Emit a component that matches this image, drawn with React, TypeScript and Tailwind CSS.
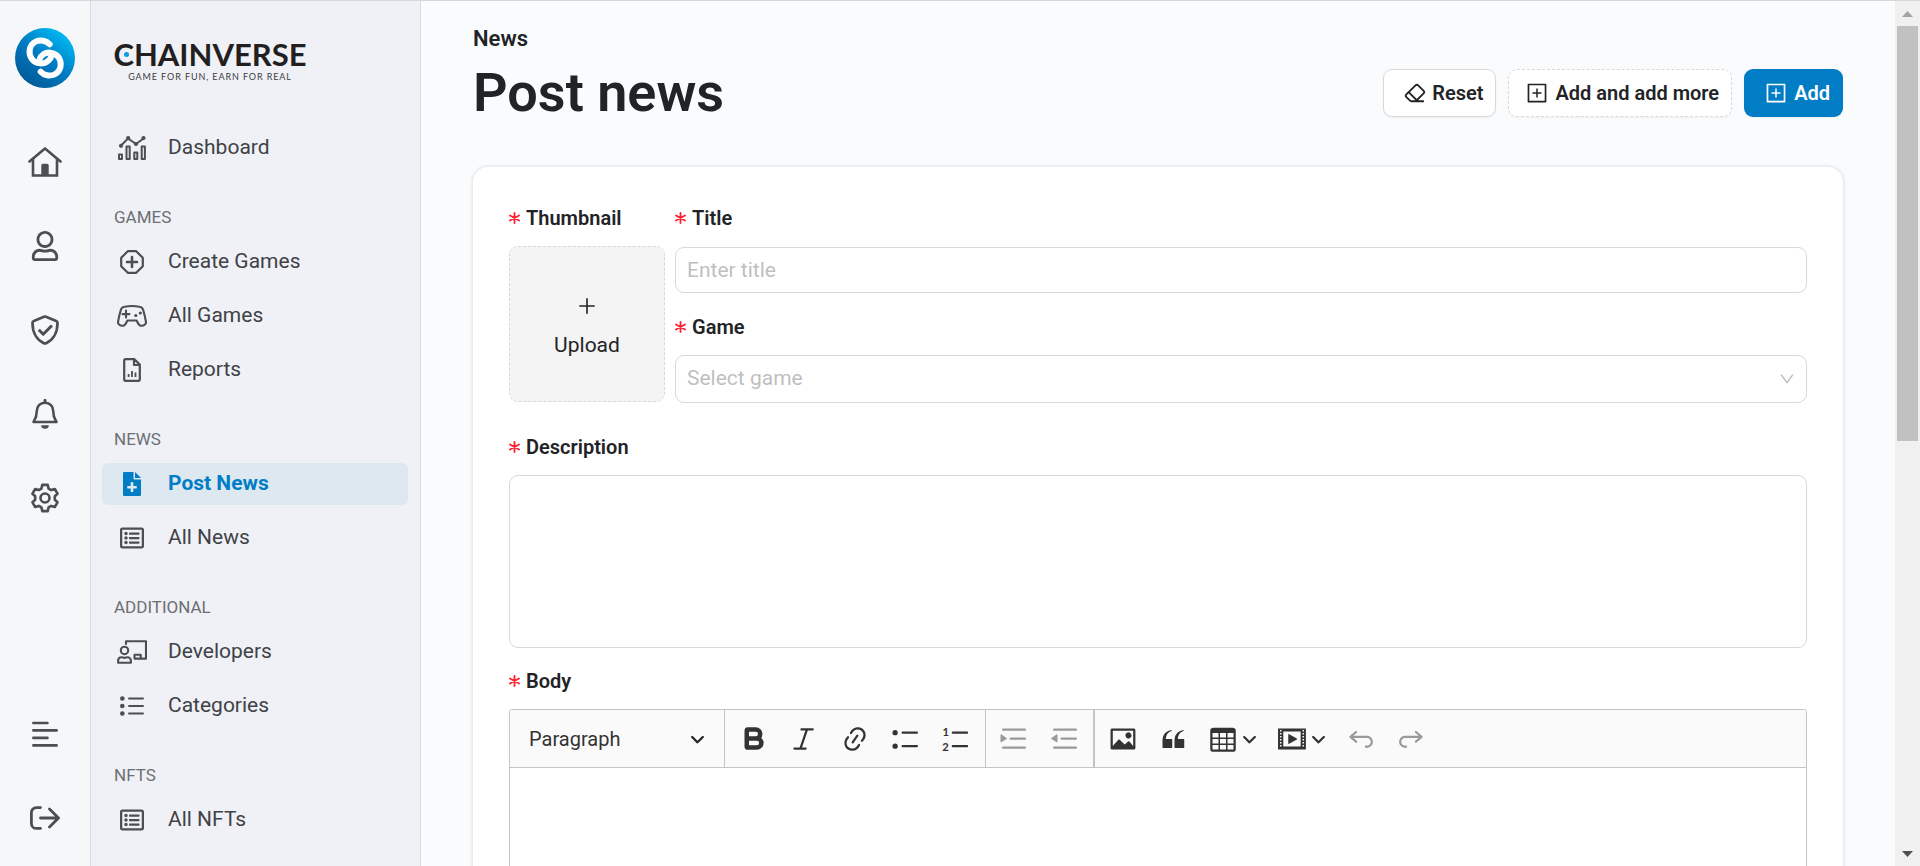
import type { ReactNode } from "react";
import { AiOutlineDown, AiOutlinePlus, AiOutlinePlusSquare } from "react-icons/ai";
import { FaRegListAlt, FaRegUser } from "react-icons/fa";
import { Bold, Eraser } from "lucide-react";

function Stroke({ w, h, sw = 2, children }: { w: number; h: number; sw?: number; children: ReactNode }) {
  return (
    <svg
      width={w}
      height={h}
      viewBox={`0 0 ${w} ${h}`}
      fill="none"
      stroke="currentColor"
      strokeWidth={sw}
      strokeLinecap="round"
      strokeLinejoin="round"
      aria-hidden="true"
    >
      {children}
    </svg>
  );
}

const HomeIcon = () => (
  <Stroke w={34} h={30} sw={2.6}>
    <path d="M1.5 14.5 17 1.6 32.5 14.5" />
    <path d="M5 12v16.5h24V12" strokeLinejoin="miter" />
    <path d="M13.3 28v-9.6a1.6 1.6 0 0 1 1.6-1.6h4.2a1.6 1.6 0 0 1 1.6 1.6V28z" fill="currentColor" stroke="none" />
  </Stroke>
);

const ShieldIcon = () => (
  <Stroke w={28} h={30} sw={2.7}>
    <path d="M13 1.8a2.6 2.6 0 0 1 2 0l10.2 4.2a2 2 0 0 1 1.3 2c0 11-5.600 17.600-11.400 20.200a2.600 2.600 0 0 1-2.200 0C7.100 25.600 1.500 19 1.500 8a2 2 0 0 1 1.300-2z" />
    <path d="m7.800 14.800 4.400 4.400 8.700-8.700" strokeWidth={3} strokeLinecap="butt" />
  </Stroke>
);

const BellIcon = () => (
  <Stroke w={26} h={30} sw={2.6}>
    <path d="M13 1.400v2" strokeWidth={3} />
    <path d="M13 3.800c-5 0-8.200 3.700-8.200 8.300 0 6-1.600 8-3.300 10.900h23c-1.700-2.900-3.300-4.900-3.300-10.900 0-4.600-3.200-8.300-8.200-8.300z" />
    <path d="M9.200 26.300h7.600a3.800 3.500 0 0 1-7.600 0z" fill="currentColor" stroke="none" />
  </Stroke>
);

const GearIcon = () => (
  <Stroke w={28} h={30} sw={2.6}>
    <circle cx="14" cy="15" r="4.500" />
    <path d="M11.300 1.900h5.400l.9 3.700 2.600 1.500 3.600-1.100 2.700 4.700-2.700 2.600v3.400l2.700 2.600-2.700 4.700-3.600-1.100-2.600 1.500-.9 3.700h-5.400l-.9-3.700-2.600-1.500-3.600 1.100-2.700-4.700 2.700-2.600v-3.400L1.500 10.700 4.200 6l3.600 1.100 2.600-1.500z" />
  </Stroke>
);

const AlignIcon = () => (
  <Stroke w={26} h={26} sw={2.700}>
    <path d="M1.400 2h14M1.400 9.400h23.200M1.400 16.900h14M1.400 24.400h23.200" />
  </Stroke>
);

const LogoutIcon = () => (
  <Stroke w={30} h={24} sw={2.800}>
    <path d="M10.500 1.600H6.400a5 5 0 0 0-5 5v10.800a5 5 0 0 0 5 5h4.100M10.500 12H28M19.500 2.900l9 9.100-9 9.100" />
  </Stroke>
);

const ChartIcon = () => (
  <Stroke w={30} h={24} sw={2}>
    <path d="m4 9.500 7-7 8 5.500 7.500-5.500" />
    <g fill="currentColor" stroke="none">
      <circle cx="4" cy="9.800" r="2.100" />
      <circle cx="11.200" cy="2.100" r="2.100" />
      <circle cx="19" cy="8" r="2.100" />
      <circle cx="26.500" cy="2.100" r="2.100" />
    </g>
    <path d="M2 18.500h3V23H2zM9.500 10.500h3.200V23H9.500zM17.300 16.500h3V23h-3zM24.700 10.500h3.200V23h-3.200z" />
  </Stroke>
);

const OctagonPlusIcon = () => (
  <Stroke w={24} h={24} sw={2.200}>
    <path d="M7.800 1.200h8.400l6.600 6.600v8.400l-6.600 6.600H7.800l-6.600-6.600V7.800z" />
    <path d="M12 7v10M7 12h10" strokeWidth={2.600} />
  </Stroke>
);

const GamepadIcon = () => (
  <Stroke w={30} h={22} sw={2.100}>
    <path d="M7.500 1.700Q15 .4 22.500 1.700c2 .3 3.200 1.500 3.700 3.300 1.200 4 2 7.700 2.700 11.500.5 2.700-2.100 4.500-5 4.200-2.400-.2-3.200-3.100-4.300-5.200h-9.200C9.300 17.600 8.500 20.500 6.100 20.700c-2.900.3-5.500-1.500-5-4.200C1.800 12.700 2.600 9 3.800 5c.5-1.800 1.700-3 3.700-3.300z" />
    <path d="M9 5.600v7M5.500 9.100h7" />
    <g fill="currentColor" stroke="none">
      <circle cx="23.300" cy="8" r="1.600" />
      <circle cx="18.800" cy="10.500" r="1.600" />
    </g>
  </Stroke>
);

const FileChartIcon = () => (
  <Stroke w={18} h={24} sw={2.200}>
    <path d="M2.800 1.200h8.600l5.400 5.400v14.600a1.600 1.600 0 0 1-1.600 1.600H2.800a1.600 1.600 0 0 1-1.600-1.600V2.800a1.600 1.600 0 0 1 1.600-1.600zM11 1.500V7h5.500" />
    <path d="M5.600 16v3M9 13v6M12.500 14.500V19" strokeWidth={1.800} strokeLinecap="butt" />
  </Stroke>
);

const FilePlusIcon = () => (
  <svg width="18" height="24" viewBox="0 0 18 24" fill="currentColor" aria-hidden="true">
    <path
      fillRule="evenodd"
      d="M1 0h9.500v6.500a1 1 0 0 0 1 1H18V23a1 1 0 0 1-1 1H1a1 1 0 0 1-1-1V1a1 1 0 0 1 1-1zm6.700 10.300v3.600H4.200v2.600h3.500v3.600h2.600v-3.600h3.500v-2.600h-3.500v-3.600z"
    />
    <path d="M12 0 18 6H12z" />
  </svg>
);

const TeacherIcon = () => (
  <Stroke w={30} h={24} sw={2.100}>
    <path d="M9 4V1.200h20v17.400H18" />
    <path d="M17.500 18.500v-3.700h6.200v3.700" />
    <circle cx="7.500" cy="10.400" r="3.700" />
    <path d="M4.600 17.300c1.200 0 1.600.6 2.900.6s1.700-.6 2.900-.6c2 0 3.500 1.500 3.500 3.500v2H1.100v-2c0-2 1.500-3.500 3.500-3.500z" />
  </Stroke>
);

const ListIcon = () => (
  <Stroke w={24} h={20} sw={2}>
    <path d="M9 2.500h14M9 10h14M9 17.500h14" />
    <g fill="currentColor" stroke="none">
      <circle cx="2.300" cy="2.500" r="2.300" />
      <circle cx="2.300" cy="10" r="2.300" />
      <circle cx="2.300" cy="17.500" r="2.300" />
    </g>
  </Stroke>
);

function Mark() {
  return (
    <svg width="60" height="60" viewBox="0 0 180 180" fill="none" role="img" aria-label="Chainverse">
      <defs>
        <linearGradient id="mark" x1="150" y1="20" x2="40" y2="165" gradientUnits="userSpaceOnUse">
          <stop stopColor="#00b9f2" />
          <stop offset="0.5" stopColor="#007cc4" />
          <stop offset="1" stopColor="#005a98" />
        </linearGradient>
      </defs>
      <circle cx="90" cy="90" r="90" fill="url(#mark)" />
      <g stroke="#fff" strokeWidth="18" strokeLinecap="round">
        <path d="M104 49C94 38 76 34 62 41C42 51 39 76 50 92C61 107 82 110 96 101C103 96 107 92 108 87" />
        <path d="M77 131C87 142 105 146 119 139C139 129 142 104 131 88C120 73 99 70 85 79C78 84 76 87 75 91" />
      </g>
    </svg>
  );
}

function Cke({ d, children }: { d?: string; children?: ReactNode }) {
  return (
    <svg width="30" height="30" viewBox="0 0 20 20" fill="currentColor" aria-hidden="true">
      {d && <path d={d} />}
      {children}
    </svg>
  );
}

const Caret = () => (
  <svg width="15" height="15" viewBox="0 0 10 10" fill="currentColor" aria-hidden="true">
    <path d="M.941 4.523a.75.75 0 1 1 1.060-1.060l3.006 3.005 3.005-3.005a.75.75 0 1 1 1.060 1.060l-3.549 3.550a.75.75 0 0 1-1.168-.136L.941 4.523z" />
  </svg>
);

const LINES =
  "M2 3.750c0 .414.336.75.75.75h14.500a.75.75 0 1 0 0-1.500H2.750a.75.75 0 0 0-.75.75zm5 6c0 .414.336.75.75.75h9.500a.75.75 0 1 0 0-1.500h-9.500a.75.75 0 0 0-.75.75zM2.750 16.500h14.500a.75.75 0 1 0 0-1.500H2.750a.75.75 0 1 0 0 1.500z";
const INDENT = "M1.632 6.950 5.020 9.358a.4.4 0 0 1-.013.661l-3.390 2.207A.4.4 0 0 1 1 11.892V7.275a.4.4 0 0 1 .632-.326z";
const OUTDENT = "M4.368 6.950.98 9.358a.4.4 0 0 0 .013.661l3.390 2.207A.4.4 0 0 0 5 11.892V7.275a.4.4 0 0 0-.632-.326z";
const LINK =
  "m11.077 15 .991-1.416a.75.75 0 1 1 1.229.86l-1.148 1.640a.748.748 0 0 1-.217.206 5.251 5.251 0 0 1-8.503-5.955.741.741 0 0 1 .12-.274l1.147-1.639a.75.75 0 1 1 1.228.86L4.933 10.700l.006.003a3.750 3.750 0 0 0 6.132 4.294l.006.004zm5.494-5.335a.748.748 0 0 1-.12.274l-1.147 1.639a.75.75 0 1 1-1.228-.86l.86-1.230a3.750 3.750 0 0 0-6.144-4.301l-.86 1.229a.75.75 0 0 1-1.229-.86l1.148-1.640a.748.748 0 0 1 .217-.206 5.251 5.251 0 0 1 8.503 5.955zm-4.563-2.532a.75.75 0 0 1 .184 1.045l-3.155 4.505a.75.75 0 1 1-1.229-.86l3.155-4.506a.75.75 0 0 1 1.045-.184z";
const IMAGE =
  "M6.910 10.540c.26-.23.64-.21.88.03l3.360 3.140 2.230-2.060a.64.64 0 0 1 .87 0l2.520 2.970V4.500H3.200v10.120l3.710-4.080zm10.270-7.510c.6 0 1.090.47 1.090 1.050v11.840c0 .59-.49 1.060-1.090 1.060H2.790c-.6 0-1.090-.47-1.090-1.060V4.080c0-.58.49-1.050 1.100-1.050h14.380zm-5.220 5.560a1.960 1.960 0 1 1 3.400-1.960 1.960 1.960 0 0 1-3.400 1.960z";
const QUOTE =
  "M3 10.423a6.500 6.500 0 0 1 6.056-6.408l.038.67C6.448 5.423 5.354 7.663 5.220 10H9c.552 0 .5.432.5.986v4.511c0 .554-.448.503-1 .503h-5c-.552 0-.5-.449-.5-1.003v-4.574zm8 0a6.500 6.500 0 0 1 6.056-6.408l.038.67c-2.646.739-3.740 2.979-3.873 5.315H17c.552 0 .5.432.5.986v4.511c0 .554-.448.503-1 .503h-5c-.552 0-.5-.449-.5-1.003v-4.574z";
const TABLE =
  "M3 6v3h4V6H3zm0 4v3h4v-3H3zm0 4v3h4v-3H3zm5 3h4v-3H8v3zm5 0h4v-3h-4v3zm4-4v-3h-4v3h4zm0-4V6h-4v3h4zm1.500 8a1.500 1.500 0 0 1-1.500 1.500H3A1.500 1.500 0 0 1 1.500 17V4c.222-.863 1.068-1.500 2-1.500h13c.932 0 1.778.637 2 1.500v13zM12 13v-3H8v3h4zm0-4V6H8v3h4z";
const MEDIA =
  "M18.680 3.030c.6 0 .59-.03.59.55v12.840c0 .59.01.56-.59.56H1.290c-.6 0-.59.03-.59-.56V3.580c0-.58-.01-.55.6-.55h17.380zM15.770 15V5H4.200v10h11.570zM2 4v1h1V4H2zm0 2v1h1V6H2zm0 2v1h1V8H2zm0 2v1h1v-1H2zm0 2v1h1v-1H2zm0 2v1h1v-1H2zM17 4v1h1V4h-1zm0 2v1h1V6h-1zm0 2v1h1V8h-1zm0 2v1h1v-1h-1zm0 2v1h1v-1h-1zm0 2v1h1v-1h-1zM7.500 7.177a.4.4 0 0 1 .593-.351l5.133 2.824a.4.4 0 0 1 0 .7l-5.133 2.824a.4.4 0 0 1-.593-.35V7.177z";
const UNDO =
  "m5.042 9.367 2.189 1.837a.75.75 0 0 1-.965 1.149l-3.788-3.180a.747.747 0 0 1-.21-.284.75.75 0 0 1 .17-.945L6.230 4.762a.75.75 0 1 1 .964 1.150L4.863 7.866h8.917A.75.75 0 0 1 14 7.900a4 4 0 1 1-1.477 7.718l.344-1.489a2.500 2.500 0 1 0 1.094-4.730l.008-.032H5.042z";
const REDO =
  "m14.958 9.367-2.189 1.837a.75.75 0 0 0 .965 1.149l3.788-3.180a.747.747 0 0 0 .21-.284.75.75 0 0 0-.17-.945L13.770 4.762a.75.75 0 1 0-.964 1.150l2.331 1.955H6.220A.75.75 0 0 0 6 7.900a4 4 0 1 0 1.477 7.718l-.344-1.489A2.500 2.500 0 1 1 6.039 9.400l-.008-.032h8.927z";

type Item = { label: string; icon: ReactNode; active?: boolean };
const groups: { title?: string; items: Item[] }[] = [
  { items: [{ label: "Dashboard", icon: <ChartIcon /> }] },
  {
    title: "GAMES",
    items: [
      { label: "Create Games", icon: <OctagonPlusIcon /> },
      { label: "All Games", icon: <GamepadIcon /> },
      { label: "Reports", icon: <FileChartIcon /> },
    ],
  },
  {
    title: "NEWS",
    items: [
      { label: "Post News", icon: <FilePlusIcon />, active: true },
      { label: "All News", icon: <FaRegListAlt size={24} /> },
    ],
  },
  {
    title: "ADDITIONAL",
    items: [
      { label: "Developers", icon: <TeacherIcon /> },
      { label: "Categories", icon: <ListIcon /> },
    ],
  },
  { title: "NFTS", items: [{ label: "All NFTs", icon: <FaRegListAlt size={24} /> }] },
];

function RailButton({ label, children }: { label: string; children: ReactNode }) {
  return (
    <button type="button" aria-label={label} className="flex h-12 w-12 items-center justify-center">
      {children}
    </button>
  );
}

function Rail() {
  return (
    <nav aria-label="Main" className="flex w-[91px] shrink-0 flex-col items-center border-r border-[#d8dade] bg-[#f6f7f9] pt-[27px] pb-6 text-[#4b4e52]">
      <Mark />
      <div className="mt-[50px] flex flex-col gap-9">
        <RailButton label="Home"><HomeIcon /></RailButton>
        <RailButton label="Account"><FaRegUser size={30} /></RailButton>
        <RailButton label="Security"><ShieldIcon /></RailButton>
        <RailButton label="Notifications"><BellIcon /></RailButton>
        <RailButton label="Settings"><GearIcon /></RailButton>
      </div>
      <div className="mt-auto flex flex-col gap-9">
        <RailButton label="Toggle menu"><AlignIcon /></RailButton>
        <RailButton label="Log out"><LogoutIcon /></RailButton>
      </div>
    </nav>
  );
}

function Sidebar() {
  return (
    <aside className="flex w-[330px] shrink-0 flex-col overflow-hidden border-r border-[#dcdde1] bg-[#eff1f6] pt-[35px] pr-3 pl-[11px]">
      <div className="relative flex w-[216px] flex-col items-center font-['Lato',sans-serif]">
        <div className="text-[31px] leading-[36px] font-bold text-[#231f20]">CHAINVERSE</div>
        <span aria-hidden="true" className="absolute top-4 left-[22px] h-[5px] w-[5px] rounded-full bg-[#0f9be0]" />
        <div className="text-[9px] leading-[10px] tracking-widest whitespace-nowrap text-[#3c3c3e]">GAME FOR FUN, EARN FOR REAL</div>
      </div>
      <nav aria-label="Sections" className="mt-[45px] flex flex-col gap-9">
        {groups.map((g) => (
          <div key={g.items[0].label}>
            {g.title && <h2 className="mb-3 px-3 text-[17px] leading-6 text-[#6c6f73]">{g.title}</h2>}
            <ul className="flex flex-col gap-3">
              {g.items.map((it) => (
                <li key={it.label}>
                  <a
                    href="#"
                    className={
                      it.active
                        ? "flex h-[42px] items-center gap-[21px] rounded-md bg-[#dde8f1] px-[15px] text-[21px] font-bold text-[#007dc5]"
                        : "flex h-[42px] items-center gap-[21px] rounded-md px-[15px] text-[21px] text-[#404246]"
                    }
                  >
                    <span className={it.active ? "flex w-[30px] shrink-0 justify-center" : "flex w-[30px] shrink-0 justify-center text-[#4b4e52]"}>{it.icon}</span>
                    {it.label}
                  </a>
                </li>
              ))}
            </ul>
          </div>
        ))}
      </nav>
    </aside>
  );
}

function Label({ htmlFor, children }: { htmlFor: string; children: ReactNode }) {
  return (
    <label htmlFor={htmlFor} className="flex items-center gap-[6px] text-[20px] leading-8 font-semibold text-[#222326]">
      <svg width="11" height="12" viewBox="0 0 11 12" stroke="#ff1f2f" strokeWidth="1.800" strokeLinecap="round" aria-hidden="true">
        <path d="M5.500 1v10M1 3.500l9 5M10 3.500l-9 5" />
      </svg>
      {children}
    </label>
  );
}

function Tool({ label, muted, children }: { label: string; muted?: boolean; children: ReactNode }) {
  return (
    <button type="button" aria-label={label} disabled={muted} className={muted ? "flex items-center gap-1 text-[#9a9a9a]" : "flex items-center gap-1 text-[#333333]"}>
      {children}
    </button>
  );
}

function Toolbar() {
  return (
    <div role="toolbar" aria-label="Editor toolbar" className="flex h-[58px] items-stretch border-b border-[#c4c4c4] bg-[#fafafa]">
      <div className="relative flex w-[215px] items-center border-r border-[#c4c4c4]">
        <select aria-label="Heading" className="h-full w-full appearance-none bg-transparent pl-[19px] text-[20px] text-[#333333] outline-none">
          <option>Paragraph</option>
          <option>Heading 1</option>
        </select>
        <span className="pointer-events-none absolute right-[19px]"><Caret /></span>
      </div>
      <div className="flex items-center gap-[21px] border-r border-[#c4c4c4] px-[13px]">
        <Tool label="Bold"><span className="flex w-[30px] justify-center"><Bold size={27} strokeWidth={4} /></span></Tool>
        <Tool label="Italic">
          <Cke>
            <path d="M8.300 3.600h7.500M3.600 16.400h7.500M12 3.600 7.600 16.400" fill="none" stroke="currentColor" strokeWidth="1.500" strokeLinecap="round" />
          </Cke>
        </Tool>
        <Tool label="Link"><Cke d={LINK} /></Tool>
        <Tool label="Bulleted list">
          <Cke>
            <circle cx="2.750" cy="5.750" r="1.750" />
            <circle cx="2.750" cy="14.750" r="1.750" />
            <path d="M7.750 5.750h9.500M7.750 14.750h9.500" stroke="currentColor" strokeWidth="1.500" strokeLinecap="round" />
          </Cke>
        </Tool>
        <Tool label="Numbered list">
          <Cke>
            <text x="0.300" y="8" fontSize="7.500" fontWeight="700" fontFamily="Lato, sans-serif">1</text>
            <text x="0.100" y="17.800" fontSize="7.500" fontWeight="700" fontFamily="Lato, sans-serif">2</text>
            <path d="M7.200 5.750h9.500M7.200 14.750h9.500" stroke="currentColor" strokeWidth="1.500" strokeLinecap="round" />
          </Cke>
        </Tool>
      </div>
      <div className="flex items-center gap-[21px] border-r-2 border-[#c4c4c4] px-[13px]">
        <Tool label="Increase indent" muted><Cke d={LINES + INDENT} /></Tool>
        <Tool label="Decrease indent" muted><Cke d={LINES + OUTDENT} /></Tool>
      </div>
      <div className="flex items-center gap-5 px-[13px]">
        <Tool label="Insert image"><Cke d={IMAGE} /></Tool>
        <Tool label="Block quote"><Cke d={QUOTE} /></Tool>
        <Tool label="Insert table"><Cke d={TABLE} /><Caret /></Tool>
        <Tool label="Insert media"><Cke d={MEDIA} /><Caret /></Tool>
        <Tool label="Undo" muted><Cke d={UNDO} /></Tool>
        <Tool label="Redo" muted><Cke d={REDO} /></Tool>
      </div>
    </div>
  );
}

export default function App() {
  return (
    <div className="flex h-screen flex-col border-t border-[#d6d7da] bg-[#fafbfd] font-['Roboto',sans-serif] text-[#222326]">
      <div className="flex min-h-0 grow">
        <Rail />
        <Sidebar />
        <main className="min-w-0 grow overflow-y-auto px-[52px] pt-[22px] [scrollbar-width:none]">
          <p className="text-[22px] leading-8 font-semibold">News</p>
          <div className="flex h-[76px] items-center justify-between">
            <h1 className="text-[54px] leading-[76px] font-semibold">Post news</h1>
            <div className="flex gap-3">
              <button type="button" className="flex h-12 items-center gap-[6px] rounded-[9px] border border-[#d9d9d9] bg-white px-3 pl-5 text-[20px] font-semibold shadow-xs">
                <Eraser size={22} strokeWidth={2} />
                Reset
              </button>
              <button type="button" className="flex h-12 items-center gap-[6px] rounded-[9px] border border-dashed border-[#d9d9d9] bg-white pr-3 pl-4 text-[20px] font-semibold shadow-xs">
                <AiOutlinePlusSquare size={24} />
                Add and add more
              </button>
              <button type="button" className="flex h-12 items-center gap-[6px] rounded-[9px] bg-[#007dc5] pr-[13px] pl-5 text-[20px] font-semibold text-white shadow-xs">
                <AiOutlinePlusSquare size={24} />
                Add
              </button>
            </div>
          </div>

          <form className="mt-9 rounded-[15px] bg-white px-9 pt-[35px] shadow-[0_0_4px_rgba(0,0,0,0.16)]">
            <div className="flex gap-[10px]">
              <div className="flex w-[156px] shrink-0 flex-col gap-3">
                <Label htmlFor="thumb">Thumbnail</Label>
                <button id="thumb" type="button" className="flex h-[156px] flex-col items-center justify-center gap-3 rounded-[9px] border border-dashed border-[#d9d9d9] bg-[#f4f4f4] pt-2 text-[21px] leading-8">
                  <AiOutlinePlus size={22} />
                  Upload
                </button>
              </div>
              <div className="flex min-w-0 grow flex-col">
                <Label htmlFor="title">Title</Label>
                <input id="title" type="text" placeholder="Enter title" className="mt-[13px] h-[46px] rounded-[9px] border border-[#d9d9d9] bg-white px-[11px] text-[21px] outline-none placeholder:text-[#bfbfbf]" />
                <div className="mt-[18px]"><Label htmlFor="game">Game</Label></div>
                <div className="relative mt-3">
                  <select id="game" defaultValue="" className="h-12 w-full appearance-none rounded-[9px] border border-[#d9d9d9] bg-white px-[11px] text-[21px] text-[#bfbfbf] outline-none">
                    <option value="">Select game</option>
                  </select>
                  <AiOutlineDown size={18} className="pointer-events-none absolute top-[15px] right-[11px] text-[#bfbfbf]" />
                </div>
              </div>
            </div>
            <div className="mt-7 flex flex-col gap-3">
              <Label htmlFor="description">Description</Label>
              <textarea id="description" className="h-[173px] resize-none rounded-[9px] border border-[#d9d9d9] bg-white px-3 py-2 text-[21px] outline-none" />
            </div>
            <div className="mt-[17px] flex flex-col gap-3">
              <Label htmlFor="body">Body</Label>
              <div className="overflow-hidden rounded-[3px] border border-[#c4c4c4]">
                <Toolbar />
                <textarea id="body" className="block h-[450px] w-full resize-none bg-white px-5 py-3 text-[21px] outline-none" />
              </div>
            </div>
            <div className="h-9" />
          </form>
        </main>
        <div aria-hidden="true" className="flex w-[25px] shrink-0 flex-col items-center bg-[#f0f0f0]">
          <svg width="25" height="25" viewBox="0 0 25 25"><path d="M7 16h11l-5.500-6z" fill="#a3a3a3" /></svg>
          <div className="h-[48%] w-[21px] bg-[#c1c1c1]" />
          <svg className="mt-auto" width="25" height="26" viewBox="0 0 25 26"><path d="M7 11h11l-5.500 6z" fill="#505050" /></svg>
        </div>
      </div>
    </div>
  );
}
